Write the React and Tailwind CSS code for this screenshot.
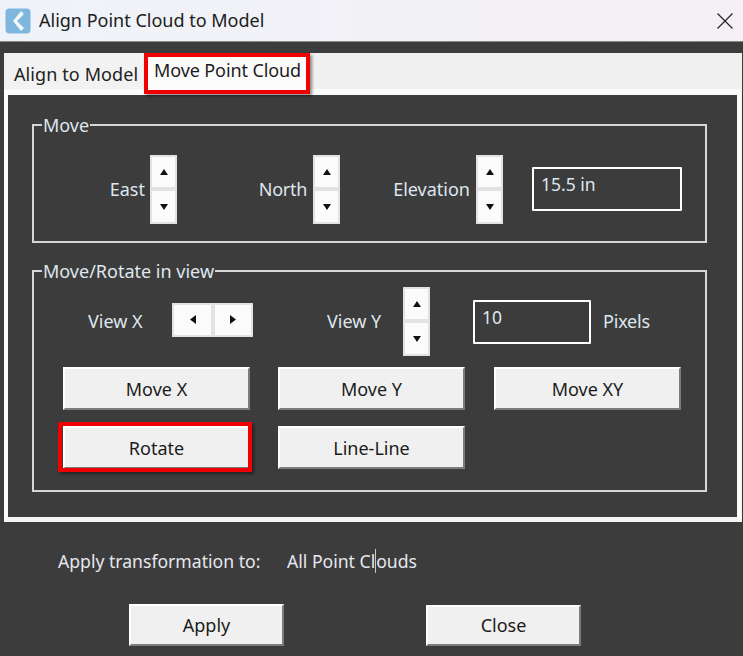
import React from 'react';

const btnClass = "bg-[#f0f0f0] border-t-2 border-l-2 border-t-white border-l-white border-r-2 border-b-2 border-r-[#7c7c7c] border-b-[#7c7c7c] text-[#1c1c1c] text-[18px] flex items-center justify-center";

const Arrow = ({ dir }) => {
  const points = {
    up: "0,6 4,0 8,6",
    down: "0,0 4,6 8,0",
    left: "6,0 0,4.5 6,9",
    right: "0,0 6,4.5 0,9",
  }[dir];
  const size = dir === 'up' || dir === 'down' ? 'w-[8px] h-[6px]' : 'w-[6px] h-[9px]';
  const box = dir === 'up' || dir === 'down' ? '0 0 8 6' : '0 0 6 9';
  return (
    <svg viewBox={box} className={size}>
      <polygon points={points} fill="#111" />
    </svg>
  );
};

const StepBtn = ({ dir, className }) => (
  <div className={`bg-[#fbfbfb] border-2 border-[#e2e2e2] flex items-center justify-center ${className}`}>
    <Arrow dir={dir} />
  </div>
);

const Spinner = () => (
  <div className="flex flex-col w-[27px] h-[69px]">
    <StepBtn dir="up" className="h-[34px]" />
    <StepBtn dir="down" className="h-[35px]" />
  </div>
);

const Group = ({ title, className, children }) => (
  <fieldset className={`border-2 border-[#d6d6d6] min-w-0 ${className}`}>
    <legend className="ml-[8px] px-[1px] text-[18px] leading-[22px] text-[#dfe6ee]">{title}</legend>
    {children}
  </fieldset>
);

const Label = ({ children, className = '' }) => (
  <span className={`text-[18px] leading-[24px] text-[#dfe6ee] ${className}`}>{children}</span>
);

const Input = ({ value, className }) => (
  <div className={`border-2 border-white rounded-[1px] pl-[7px] pt-[3px] text-[17.5px] leading-[24px] text-[#dfe6ee] ${className}`}>{value}</div>
);

export default function App() {
  return (
    <div className="w-[743px] h-[656px] bg-[#3c3c3c] overflow-hidden font-['Noto_Sans',sans-serif]">
      {/* title bar */}
      <div className="h-[42px] bg-gradient-to-r from-[#eff3f9] to-[#f5f0f5] border-b border-b-[#8a8a8a] flex items-center pl-[5px] pr-[10px]">
        <svg viewBox="0 0 26 26" className="w-[26px] h-[26px]">
          <rect x="0.5" y="0.5" width="25" height="25" rx="4" fill="#7fb6de" />
          <polygon points="16,3 19,6 12,13 19,20 16,23 8,13" fill="#f2f7fb" />
        </svg>
        <span className="ml-[8px] text-[18px] text-[#202020]">Align Point Cloud to Model</span>
        <svg viewBox="0 0 16 16" className="w-[16px] h-[16px] ml-auto" fill="none" stroke="#222" strokeWidth="1.2">
          <path d="M0.5 0.5 L15.5 15.5 M15.5 0.5 L0.5 15.5" />
        </svg>
      </div>

      {/* tab panel */}
      <div className="mt-[11px] ml-[4px] w-[738px] h-[469px] bg-[#f0f0f0] flex flex-col">
        <div className="h-[36px] flex items-end pl-[3px] shrink-0">
          <div className="h-[34px] w-[137px] pl-[7px] text-[18px] leading-[38px] tracking-[0.1px] text-[#222] bg-[#f2f2f2]">Align to Model</div>
          <div className="relative z-10 -mb-[5px] h-[41px] w-[166px] border-4 border-[#f00000] bg-[#fbfbfb] shadow-[2px_2px_3px_rgba(0,0,0,0.45)] pl-[6px] text-[18px] leading-[26px] tracking-[-0.1px] text-[#1c1c1c]">Move Point Cloud</div>
        </div>
        <div className="flex-1 border-x-4 border-b-[5px] border-t-[6px] border-x-[#fbfbfb] border-b-[#f4f4f4] border-t-[#fbfbfb] bg-[#3c3c3c] mr-[1px] pl-[24px] pr-[30px]">
          <Group title="Move" className="mt-[19px] h-[129px]">
            <div className="flex items-start mt-[19px]">
              <div className="w-[143px] h-[69px] flex items-center justify-end gap-[5px]">
                <Label className="mb-[1px]">East</Label>
                <Spinner />
              </div>
              <div className="w-[163px] h-[69px] flex items-center justify-end gap-[6px]">
                <Label className="mb-[1px] tracking-[-0.3px]">North</Label>
                <Spinner />
              </div>
              <div className="w-[163px] h-[69px] flex items-center justify-end gap-[6px]">
                <Label className="mb-[1px]">Elevation</Label>
                <Spinner />
              </div>
              <Input value="15.5 in" className="ml-[29px] mt-[12px] w-[150px] h-[44px]" />
            </div>
          </Group>
          <Group title="Move/Rotate in view" className="mt-[17px] h-[232px]">
            <div className="h-[69px] mt-[5px] flex items-center">
              <Label className="ml-[54px] w-[84px] mb-[2px]">View X</Label>
              <div className="flex h-[34px] mb-[4px]">
                <StepBtn dir="left" className="w-[41px]" />
                <StepBtn dir="right" className="w-[40px]" />
              </div>
              <Label className="ml-[74px] w-[76px] mb-[2px]">View Y</Label>
              <Spinner />
              <Input value="10" className="ml-[43px] w-[118px] h-[44px]" />
              <Label className="ml-[12px] mb-[2px] tracking-[-0.2px]">Pixels</Label>
            </div>
            <div className="grid grid-cols-[187px_188px_187px] gap-x-[28px] gap-y-[16px] ml-[29px] mt-[11px]">
              <div className={`${btnClass} pt-[2px] w-[187px] h-[43px]`}>Move X</div>
              <div className={`${btnClass} pt-[2px] w-[187px] h-[43px]`}>Move Y</div>
              <div className={`${btnClass} pt-[2px] w-[187px] h-[43px]`}>Move XY</div>
              <div className="relative w-[187px] h-[43px]">
                <div className={`${btnClass} pt-[2px] w-full h-full`}>Rotate</div>
                <div className="absolute -left-[5px] -top-[4px] w-[194px] h-[50px] border-4 border-[#f00000] shadow-[2px_2px_3px_rgba(0,0,0,0.45)]" />
              </div>
              <div className={`${btnClass} pt-[2px] w-[187px] h-[43px]`}>Line-Line</div>
            </div>
          </Group>
        </div>
      </div>

      {/* apply row */}
      <div className="flex items-center h-[24px] mt-[27px] pl-[58px]">
        <span className="w-[229px] text-[17.6px] leading-[24px] text-[#e4e8ee]">Apply transformation to:</span>
        <span className="text-[17.6px] leading-[24px] text-[#e4e8ee] inline-flex">
          All Point Cl<span className="border-l border-l-[#c8c8c8]">ouds</span>
        </span>
      </div>

      {/* footer buttons */}
      <div className="flex items-start mt-[31px] pl-[129px] gap-[142px]">
        <div className={`${btnClass} w-[155px] h-[42px]`}>Apply</div>
        <div className={`${btnClass} w-[155px] h-[41px] mt-[1px]`}>Close</div>
      </div>
    </div>
  );
}
